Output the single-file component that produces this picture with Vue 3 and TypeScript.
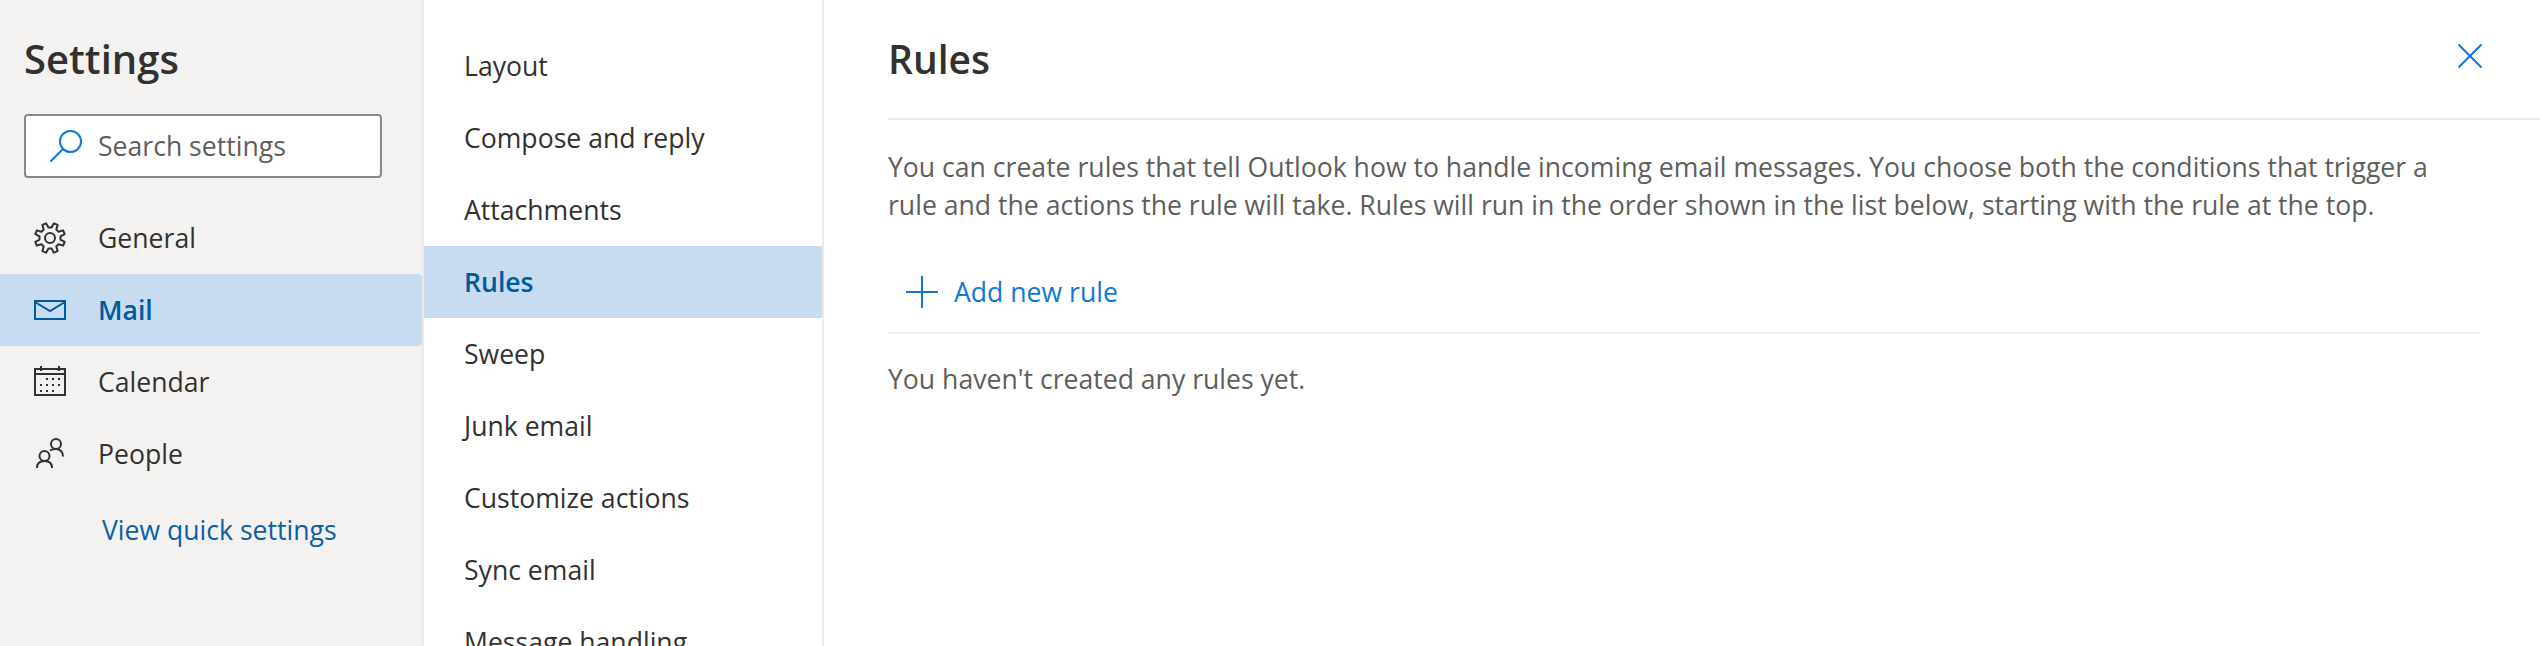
<script setup lang="ts">
const subItems: string[] = ['Layout', 'Compose and reply', 'Attachments', 'Rules', 'Sweep', 'Junk email', 'Customize actions', 'Sync email', 'Message handling']

function gearPath(): string {
  const cx = 16, cy = 16, teeth = 8
  const pts: string[] = []
  for (let i = 0; i < teeth; i++) {
    const a = (i / teeth) * Math.PI * 2 + Math.PI / 8
    const step = Math.PI / teeth
    const seq: [number, number][] = [[10.6, -step * 0.62], [15.2, -step * 0.34], [15.2, step * 0.34], [10.6, step * 0.62]]
    for (const [r, d] of seq) {
      pts.push(`${(cx + r * Math.cos(a + d)).toFixed(2)} ${(cy + r * Math.sin(a + d)).toFixed(2)}`)
    }
  }
  return 'M' + pts.join('L') + 'Z'
}
const gear = gearPath()

const calendarDots: { x: number; y: number }[] = []
for (let r = 0; r < 3; r++) {
  for (let c = 0; c < 4; c++) {
    if ((r === 0 && c === 0) || (r === 2 && c === 3)) continue
    calendarDots.push({ x: 6 + c * 6, y: 12 + r * 6 })
  }
}
</script>

<template>
  <div class="app">
    <aside class="settings">
      <h1 class="title">Settings</h1>
      <div class="search">
        <svg class="search-icon" viewBox="0 0 32 32" fill="none" stroke="#0f78d4" stroke-width="2">
          <circle cx="20.5" cy="11.5" r="10.5" />
          <path d="M13 19 1 31" stroke-linecap="round" />
        </svg>
        <span class="placeholder">Search settings</span>
      </div>
      <nav class="nav">
        <div class="nav-row">
          <svg class="nav-icon" viewBox="0 0 32 32" fill="none" stroke="#323130" stroke-width="2" stroke-linejoin="round">
            <path :d="gear" />
            <circle cx="16" cy="16" r="5" />
          </svg>
          <span>General</span>
        </div>
        <div class="nav-row active">
          <svg class="nav-icon" viewBox="0 0 32 32" fill="none" stroke="#005a9e" stroke-width="2">
            <rect x="1" y="7" width="30" height="18" />
            <path d="M1 8 16 17 31 8" />
          </svg>
          <span>Mail</span>
        </div>
        <div class="nav-row">
          <svg class="nav-icon" viewBox="0 0 32 32" fill="none" stroke="#323130" stroke-width="2">
            <rect x="1" y="3" width="30" height="26" />
            <path d="M1 8h30M7 0v5M25 0v5" />
            <rect v-for="d in calendarDots" :key="d.x + '-' + d.y" :x="d.x" :y="d.y" width="2" height="2" fill="#323130" stroke="none" />
          </svg>
          <span>Calendar</span>
        </div>
        <div class="nav-row">
          <svg class="nav-icon" viewBox="0 0 32 32" fill="none" stroke="#323130" stroke-width="2">
            <circle cx="10.500" cy="18" r="5" />
            <path d="M3 30c0-5 3-7 7.500-7s7.500 2 7.500 7" />
            <circle cx="22" cy="6" r="5" />
            <path d="M16 12.500c1.500-1 4-1.500 6-1.500 4 0 7 3 7 7.500" />
          </svg>
          <span>People</span>
        </div>
      </nav>
      <a class="quick">View quick settings</a>
    </aside>

    <nav class="subnav">
      <div v-for="item in subItems" :key="item" class="sub-row" :class="{ active: item === 'Rules' }">{{ item }}</div>
    </nav>

    <main class="content">
      <header class="head">
        <h2 class="title rules-title">Rules</h2>
        <svg class="close" viewBox="0 0 24 24" fill="none" stroke="#0f78d4" stroke-width="2">
          <path d="M.5.5l23 23M23.500.5l-23 23" />
        </svg>
      </header>
      <div class="body">
        <p class="intro">You can create rules that tell Outlook how to handle incoming email messages. You choose both the conditions that trigger a rule and the actions the rule will take. Rules will run in the order shown in the list below, starting with the rule at the top.</p>
        <div class="add">
          <svg class="plus" viewBox="0 0 32 32" fill="none" stroke="#0f78d4" stroke-width="2">
            <path d="M16 0v32M0 16h32" />
          </svg>
          <span>Add new rule</span>
        </div>
        <p class="empty">You haven't created any rules yet.</p>
      </div>
    </main>
  </div>
</template>

<style scoped>
.app {
  display: flex;
  height: 646px;
  overflow: hidden;
  font-family: "Open Sans", "Noto Sans", sans-serif;
  font-size: 26.6px;
  color: #323130;
  background: #fff;
}
.settings {
  flex: 0 0 422px;
  background: #f3f2f1;
  padding-top: 31px;
  box-sizing: border-box;
}
.title {
  margin: 0;
  font-size: 40px;
  line-height: 56px;
  font-weight: 600;
  color: #323130;
}
.rules-title {
  font-size: 39px;
}
.settings .title {
  padding-left: 24px;
}
.search {
  margin: 27px 0 0 24px;
  width: 358px;
  height: 64px;
  box-sizing: border-box;
  border: 2px solid #8a8886;
  border-radius: 4px;
  background: #fff;
  display: flex;
  align-items: center;
  padding-left: 24px;
}
.search-icon {
  width: 32px;
  height: 32px;
  flex: none;
}
.placeholder {
  margin-left: 16px;
  color: #605e5c;
}
.nav {
  margin-top: 24px;
}
.nav-row {
  height: 72px;
  display: flex;
  align-items: center;
  padding-left: 34px;
  border-radius: 0 4px 4px 0;
}
.nav-row span {
  margin-left: 32px;
}
.nav-icon {
  width: 32px;
  height: 32px;
  flex: none;
}
.nav-row.active {
  background: #c7dcf1;
  color: #005a9e;
  font-weight: 600;
}
.quick {
  display: block;
  margin: 20px 0 0 102px;
  line-height: 40px;
  color: #0b5fa5;
}
.subnav {
  flex: 0 0 400px;
  padding-top: 30px;
  box-sizing: border-box;
  border-left: 2px solid #edebe9;
}
.sub-row {
  height: 72px;
  line-height: 72px;
  padding-left: 40px;
}
.sub-row.active {
  background: #c7dcf1;
  color: #005a9e;
  font-weight: 600;
}
.content {
  flex: 1;
  border-left: 2px solid #edebe9;
  min-width: 0;
}
.head {
  margin-left: 64px;
  height: 120px;
  box-sizing: border-box;
  padding-top: 31px;
  border-bottom: 2px solid #edebe9;
  display: flex;
  justify-content: space-between;
}
.close {
  width: 24px;
  height: 24px;
  margin: 13px 58px 0 0;
}
.body {
  padding: 28px 60px 0 64px;
}
.intro {
  margin: 0;
  line-height: 38px;
  color: #605e5c;
}
.add {
  margin-top: 36px;
  height: 74px;
  display: flex;
  align-items: center;
  padding-left: 18px;
  color: #0f78d4;
  border-bottom: 2px solid #f3f2f1;
  padding-bottom: 8px;
  box-sizing: border-box;
}
.plus {
  width: 32px;
  height: 32px;
  flex: none;
  margin-right: 16px;
}
.empty {
  margin: 26px 0 0;
  line-height: 38px;
  color: #605e5c;
}
</style>
